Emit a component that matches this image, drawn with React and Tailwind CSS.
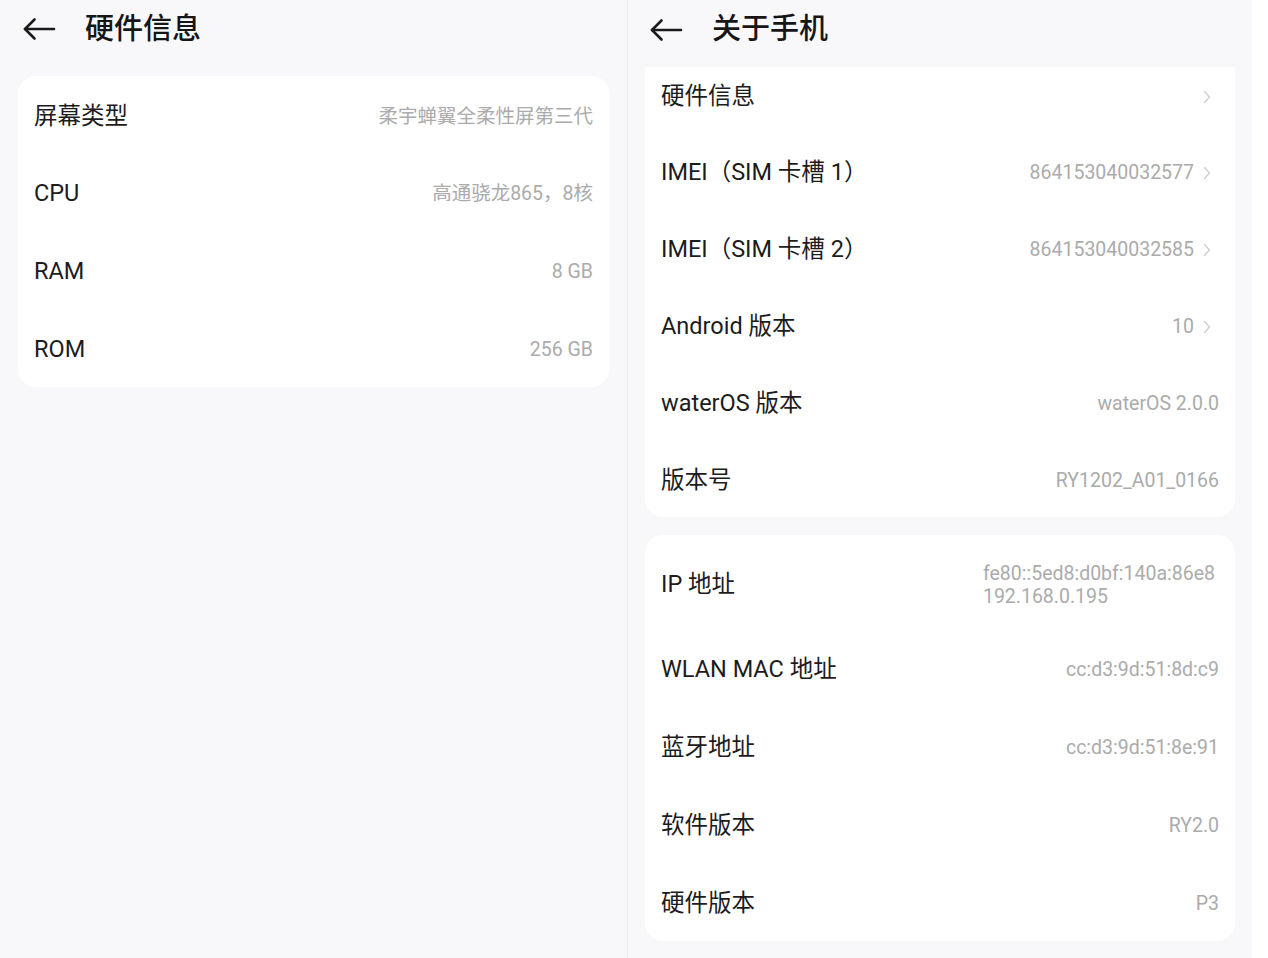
import React from "react"

const FONT = { fontFamily: "Roboto, 'Noto Sans CJK SC', sans-serif" }

const BackArrow = () => (
  <svg width="34" height="24" viewBox="0 0 34 24" fill="none" stroke="#1a1a1a" strokeWidth="2.6" strokeLinecap="round" strokeLinejoin="round">
    <path d="M32 12H3" />
    <path d="M12.5 2.5L3 12l9.5 9.5" />
  </svg>
)

const Chevron = () => (
  <svg width="8" height="14" viewBox="0 0 8 14" fill="none" stroke="#cfcfd2" strokeWidth="1.4" strokeLinecap="round" strokeLinejoin="round" className="ml-[9px]">
    <path d="M1.5 1.5L6.5 7l-5 5.5" />
  </svg>
)

const Header = ({ title, left, h }) => (
  <div className={`flex items-center ${h}`} style={{ paddingLeft: left }}>
    <BackArrow />
    <span className="ml-[29px] text-[29px] font-medium text-[#161616] leading-none">{title}</span>
  </div>
)

const Row = ({ label, value, arrow, h = "h-[78px]", extra = "pt-[4px]" }) => (
  <div className={`flex items-center justify-between pl-4 ${arrow ? "pr-6" : "pr-4"} ${h} ${extra}`}>
    <span className="text-[23.5px] text-[#1c1c1c] whitespace-nowrap">{label}</span>
    <div className="flex items-center">
      <span className="text-[19.5px] text-[#ababab] whitespace-nowrap">{value}</span>
      {arrow && <Chevron />}
    </div>
  </div>
)

const hardware = [
  ["屏幕类型", "柔宇蝉翼全柔性屏第三代"],
  ["CPU", "高通骁龙865，8核"],
  ["RAM", "8 GB"],
  ["ROM", "256 GB"],
]

export default function App() {
  return (
    <div className="flex w-[1268px] h-[958px] bg-white overflow-hidden" style={FONT}>
      {/* left: 硬件信息 */}
      <div className="w-[627px] h-full bg-[#f8f8fb] flex flex-col">
        <Header title="硬件信息" left={22} h="h-[58px]" />
        <div className="mx-[18px] mt-[18px] bg-white rounded-[18px] overflow-hidden">
          {hardware.map(([l, v], i) => (
            <Row key={i} label={l} value={v} h={i === 0 ? "h-[77px]" : "h-[78px]"} />
          ))}
        </div>
      </div>
      <div className="w-[1px] h-full bg-[#ebecf0]" />
      {/* right: 关于手机 */}
      <div className="w-[624px] h-full bg-[#f8f8fb] flex flex-col">
        <Header title="关于手机" left={21} h="h-[59px]" />
        <div className="mt-[8px] mx-[17px] bg-white rounded-b-[18px]">
          <Row label="硬件信息" value="" arrow h="h-[65px]" extra="pb-[5px]" />
          <Row label="IMEI（SIM 卡槽 1）" value="864153040032577" arrow h="h-[77px]" />
          <Row label="IMEI（SIM 卡槽 2）" value="864153040032585" arrow h="h-[77px]" />
          <Row label="Android 版本" value="10" arrow h="h-[77px]" />
          <Row label="waterOS 版本" value="waterOS 2.0.0" h="h-[77px]" />
          <Row label="版本号" value="RY1202_A01_0166" h="h-[77px]" />
        </div>
        <div className="mt-[18px] mx-[17px] bg-white rounded-[18px]">
          <div className="flex items-center justify-between pl-4 pr-5 pt-[5px] h-[94px]">
            <span className="text-[23.5px] text-[#1c1c1c]">IP 地址</span>
            <div className="text-[19.5px] leading-[23px] text-[#ababab]">
              <div>fe80::5ed8:d0bf:140a:86e8</div>
              <div>192.168.0.195</div>
            </div>
          </div>
          <Row label="WLAN MAC 地址" value="cc:d3:9d:51:8d:c9" />
          <Row label="蓝牙地址" value="cc:d3:9d:51:8e:91" />
          <Row label="软件版本" value="RY2.0" />
          <Row label="硬件版本" value="P3" />
        </div>
      </div>
      <div className="flex-1 h-full bg-white" />
    </div>
  )
}
